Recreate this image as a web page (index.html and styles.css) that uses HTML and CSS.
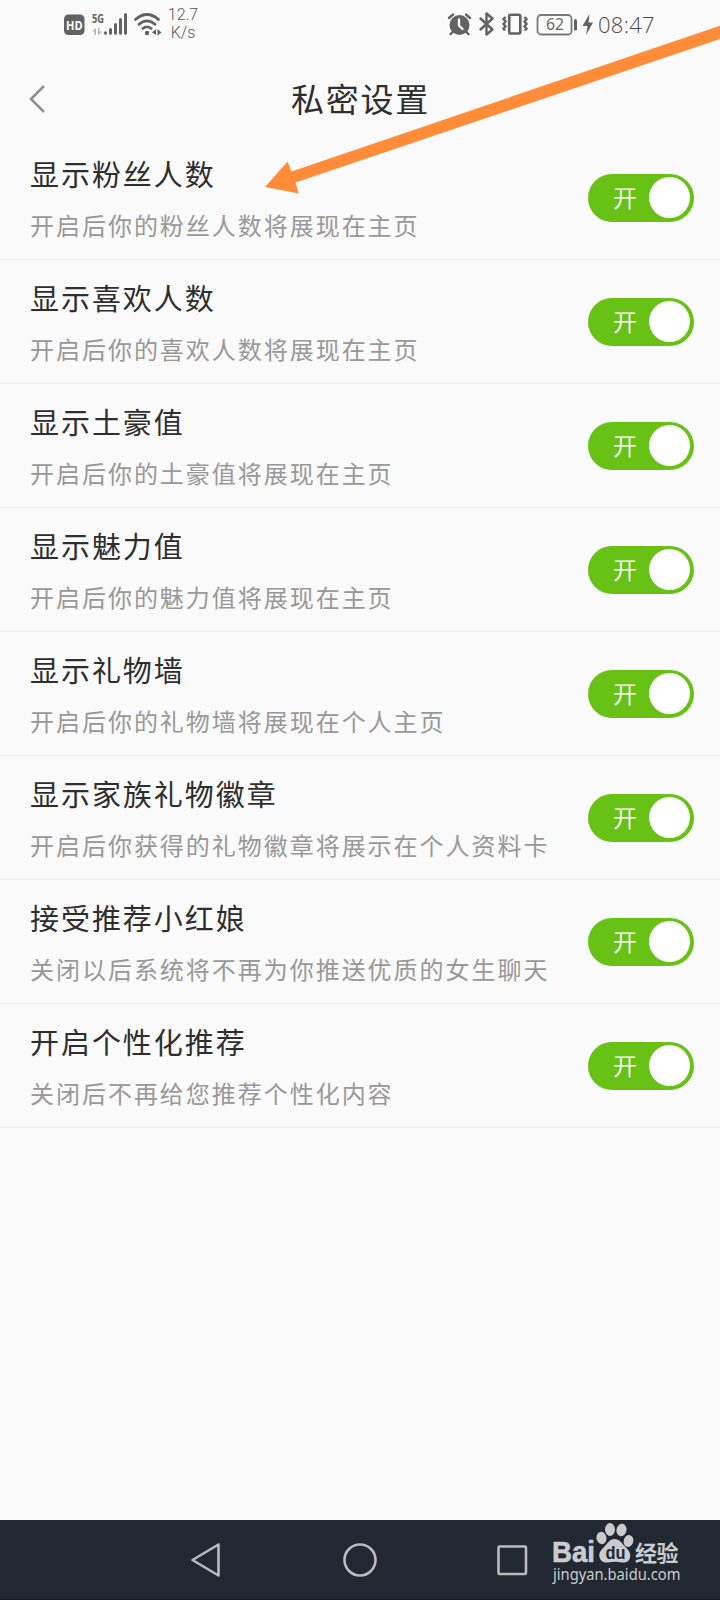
FILE: index.html
```html
<!DOCTYPE html>
<html lang="zh-CN">

<head>
    <meta charset="UTF-8">
    <title>私密设置</title>
    <link rel="stylesheet" href="styles.css">
</head>

<body>
    <div class="status">
        <svg class="status-icons" width="98" height="30" viewBox="63 9 98 30">
            <rect x="64" y="14.500" width="20.500" height="20.500" rx="4.500" fill="#626262" />
            <text class="hd" x="66" y="29.700" textLength="16.500" lengthAdjust="spacingAndGlyphs">HD</text>
            <text class="g5" x="92" y="23" textLength="12" lengthAdjust="spacingAndGlyphs">5G</text>
            <path d="M92 31.500l4-3.500v7h-1.500v-3.500zM98 28h1.500v3.500h3l-4.500 3.500z" fill="#b5b5b5" />
            <path d="M105.500 32.800v.5M110.500 29.500v3.800M115.500 24.500v8.800M120.500 19.500v13.800M125.500 14.500v18.800" stroke="#626262" stroke-width="3" stroke-linecap="round" />
            <g fill="none" stroke="#626262" stroke-width="2.800" stroke-linecap="round">
                <path d="M135.500 19.500Q147 9.500 158.500 19.500M139 24.300Q147 17.500 155 24.300M142.800 28.500Q147 25.300 151.200 28.500" />
            </g>
            <circle cx="147" cy="33" r="2.200" fill="#626262" />
            <path d="M152 32.500l4-3.500v6zM157.500 29l4 3.500-4 3z" fill="#626262" />
        </svg>
        <div class="speed">12.7<br>K/s</div>
        <svg class="status-right" width="148" height="26" viewBox="447 11 148 26">
            <circle cx="459.500" cy="25" r="10" fill="#626262" />
            <g fill="none" stroke="#626262" stroke-width="2.400" stroke-linecap="round">
                <path d="M449 18l4-3.500M470 18l-4-3.500M452.500 32l-2 2.200M466.500 32l2 2.200" />
                <path d="M459 19.500v6l3.500 3.500" stroke="#fafafa" />
            </g>
            <path d="M480.500 18.500l12 11-6 5V13.500l6 5-12 11" fill="none" stroke="#626262" stroke-width="2.400" stroke-linejoin="round" stroke-linecap="round" />
            <rect x="509.200" y="14.700" width="11.100" height="18.800" rx="1.500" fill="none" stroke="#626262" stroke-width="2.600" />
            <path d="M505.500 17l-2 2 2 2.500-2 2.500 2 2.500-2 2 1.500 2M524.500 17l2 2-2 2.500 2 2.500-2 2.500 2 2-1.500 2" fill="none" stroke="#626262" stroke-width="2.400" />
            <rect x="537.500" y="15" width="34" height="19.500" rx="3.500" fill="none" stroke="#7a7a7a" stroke-width="1.800" />
            <path d="M575.500 20.500v8.500" stroke="#626262" stroke-width="3" stroke-linecap="round" />
            <text class="battery" x="546" y="30.200" textLength="18" lengthAdjust="spacingAndGlyphs">62</text>
            <path d="M589.500 14l-7 12h5l-1.500 9 7-12.500h-4.500z" fill="#626262" />
        </svg>
        <div class="time">08:47</div>
    </div>

    <div class="header">
        <svg class="back" width="20" height="30" viewBox="0 0 20 30">
            <path d="M16 2L3 15l13 13" fill="none" stroke="#8f8f8f" stroke-width="2.600" />
        </svg>
        <h1>私密设置</h1>
    </div>

    <div class="list">
        <div class="row">
            <div class="info">
                <p class="name">显示粉丝人数</p>
                <p class="desc">开启后你的粉丝人数将展现在主页</p>
            </div>
            <div class="switch"><span>开</span><i class="knob"></i></div>
        </div>
        <div class="row">
            <div class="info">
                <p class="name">显示喜欢人数</p>
                <p class="desc">开启后你的喜欢人数将展现在主页</p>
            </div>
            <div class="switch"><span>开</span><i class="knob"></i></div>
        </div>
        <div class="row">
            <div class="info">
                <p class="name">显示土豪值</p>
                <p class="desc">开启后你的土豪值将展现在主页</p>
            </div>
            <div class="switch"><span>开</span><i class="knob"></i></div>
        </div>
        <div class="row">
            <div class="info">
                <p class="name">显示魅力值</p>
                <p class="desc">开启后你的魅力值将展现在主页</p>
            </div>
            <div class="switch"><span>开</span><i class="knob"></i></div>
        </div>
        <div class="row">
            <div class="info">
                <p class="name">显示礼物墙</p>
                <p class="desc">开启后你的礼物墙将展现在个人主页</p>
            </div>
            <div class="switch"><span>开</span><i class="knob"></i></div>
        </div>
        <div class="row">
            <div class="info">
                <p class="name">显示家族礼物徽章</p>
                <p class="desc">开启后你获得的礼物徽章将展示在个人资料卡</p>
            </div>
            <div class="switch"><span>开</span><i class="knob"></i></div>
        </div>
        <div class="row">
            <div class="info">
                <p class="name">接受推荐小红娘</p>
                <p class="desc">关闭以后系统将不再为你推送优质的女生聊天</p>
            </div>
            <div class="switch"><span>开</span><i class="knob"></i></div>
        </div>
        <div class="row">
            <div class="info">
                <p class="name">开启个性化推荐</p>
                <p class="desc">关闭后不再给您推荐个性化内容</p>
            </div>
            <div class="switch"><span>开</span><i class="knob"></i></div>
        </div>
    </div>

    <div class="nav">
        <svg width="36" height="36" viewBox="0 0 36 36">
            <path d="M29.500 2.500v31L3.500 18z" />
        </svg>
        <svg width="36" height="36" viewBox="0 0 36 36">
            <circle cx="18" cy="18" r="15.500" />
        </svg>
        <svg width="36" height="36" viewBox="0 0 36 36">
            <rect x="3.500" y="4.500" width="27.500" height="27.500" rx="1" />
        </svg>
    </div>

    <svg class="arrow" width="460" height="174" viewBox="260 24 460 174">
        <path d="M265 187L287.500 161.500 291.500 171.500 720 25.700V39L295.500 182.500 298.700 193.500z" fill="#ff8c38" />
    </svg>

    <svg class="mark" width="140" height="78" viewBox="545 1516 140 78">
        <text class="mark-bai" x="552" y="1561.500" textLength="43" lengthAdjust="spacingAndGlyphs">Bai</text>
        <g class="paw">
            <ellipse cx="601.500" cy="1538" rx="5" ry="6.200" transform="rotate(-12 601.500 1538)" />
            <ellipse cx="610" cy="1529.500" rx="5" ry="6.500" />
            <ellipse cx="621.500" cy="1530" rx="5" ry="6.300" transform="rotate(12 621.500 1530)" />
            <ellipse cx="628.500" cy="1541" rx="4.800" ry="6" transform="rotate(15 628.500 1541)" />
            <path d="M614.500 1539c5 0 7 4 10.500 7.500 4 4 6 7 5 11-1 4.500-4.500 5.500-8 5-5-1-9-1-14 0-4 .5-7.500-1-8.500-5.500-1-4 1.500-7 5-10.500 3.500-3.500 5-7.500 10-7.500z" />
        </g>
        <text class="mark-du" x="605.500" y="1559" textLength="20" lengthAdjust="spacingAndGlyphs">du</text>
        <text class="mark-cn" x="635" y="1560.500" textLength="43.500">经验</text>
        <text class="mark-url" x="553" y="1579.500" textLength="127.500" lengthAdjust="spacingAndGlyphs">jingyan.baidu.com</text>
    </svg>
</body>

</html>
```

FILE: styles.css
```css
* {
    box-sizing: border-box;
    margin: 0;
    padding: 0;
}

body {
    position: relative;
    width: 720px;
    height: 1600px;
    overflow: hidden;
    display: flex;
    flex-direction: column;
    background: #fafafa;
    font-family: "Noto Sans CJK SC", sans-serif;
}

.status {
    height: 60px;
    padding: 0 64px 12px 63px;
    display: flex;
    align-items: center;
    color: #626262;
}

.status svg {
    overflow: visible;
}

.hd {
    font: bold 13px "Open Sans", sans-serif;
    fill: #fff;
}

.g5 {
    font: bold 13px "Open Sans", sans-serif;
    fill: #626262;
}

.speed {
    width: 36px;
    margin-left: 4px;
    text-align: center;
    font: 300 16px/18px Roboto, sans-serif;
    color: #555;
}

.status-right {
    margin-left: auto;
}

.battery {
    font: 15.5px "Noto Sans", sans-serif;
    fill: #6a6a6a;
}

.time {
    width: 58px;
    margin-left: 3px;
    font: 300 22px/26px "Open Sans", sans-serif;
    letter-spacing: 0.3px;
    white-space: nowrap;
    color: #4a4a4a;
}

.header {
    height: 76px;
    padding: 0 27px 0 28px;
    display: flex;
    align-items: center;
}

.back {
    margin-bottom: -1px;
}

h1 {
    flex: 1;
    padding-right: 20px;
    text-align: center;
    font-size: 33px;
    font-weight: 400;
    letter-spacing: 1.8px;
    color: #2e2e2e;
}

.row {
    height: 124px;
    padding: 0 26px 0 30px;
    display: flex;
    align-items: center;
    justify-content: space-between;
    border-bottom: 1px solid #ececec;
}

.info {
    display: flex;
    flex-direction: column;
    gap: 12px;
    white-space: nowrap;
}

.name {
    font-size: 29px;
    line-height: 42px;
    letter-spacing: 1.95px;
    color: #2e2e2e;
}

.desc {
    font-size: 24px;
    line-height: 38px;
    letter-spacing: 1.97px;
    color: #989898;
}

.switch {
    width: 106px;
    height: 48px;
    padding: 0 4.5px 0 25px;
    display: flex;
    align-items: center;
    justify-content: space-between;
    border-radius: 24px;
    background: #67c215;
    color: #fff;
    font-size: 24px;
    font-weight: 350;
    line-height: 46px;
}

.switch span {
    padding-bottom: 2px;
}

.knob {
    width: 41px;
    height: 41px;
    border-radius: 50%;
    background: #fff;
}

.nav {
    height: 80px;
    margin-top: auto;
    display: flex;
    align-items: center;
    justify-content: center;
    gap: 117px;
    background: #222831;
    border-bottom: 1px solid #20182a;
}

.nav svg {
    fill: none;
    stroke: #b9babd;
    stroke-width: 2.6;
    stroke-linejoin: round;
}

.arrow {
    position: absolute;
    left: 260px;
    top: 24px;
}

.mark {
    position: absolute;
    left: 545px;
    top: 1516px;
    fill: #c9cbcf;
}

.mark-bai {
    font: bold 29px "Liberation Sans", sans-serif;
    stroke: #c9cbcf;
    stroke-width: 0.6;
}

.mark-du {
    font: bold 19px "Liberation Sans", sans-serif;
    fill: #222831;
}

.mark-cn {
    font: bold 22px "Noto Sans CJK SC", sans-serif;
}

.mark-url {
    font: 17px "Noto Sans", sans-serif;
}
```
